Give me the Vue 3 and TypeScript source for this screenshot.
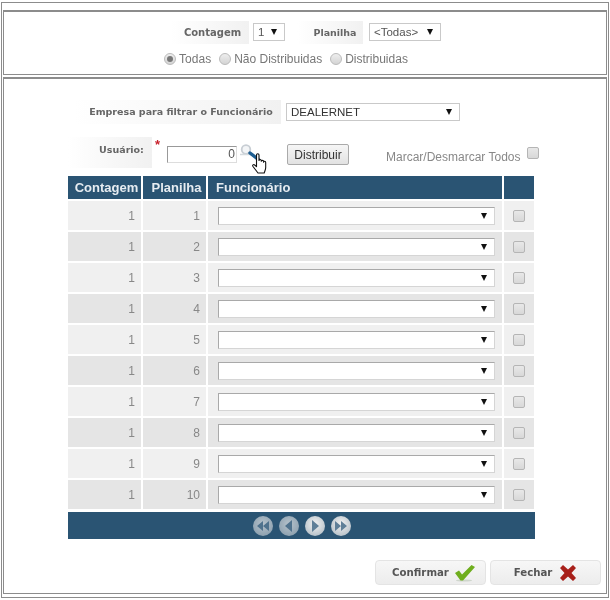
<template>
    <div class="frame">
        <section class="panel filters">
            <div class="filter-row">
                <span class="label label-contagem">Contagem</span>
                <div class="select select-count"><span>1</span><i class="arrow"></i></div>
                <span class="label label-planilha">Planilha</span>
                <div class="select select-sheet"><span>&lt;Todas&gt;</span><i class="arrow"></i></div>
            </div>
            <div class="radio-row">
                <label v-for="opt in radioOptions" :key="opt" class="radio-option">
                    <span class="radio" :class="{ on: opt === selected }"></span>{{ opt }}
                </label>
            </div>
        </section>

        <section class="panel main">
            <div class="company-row">
                <span class="label label-company">Empresa para filtrar o Funcionário</span>
                <div class="select select-company"><span>DEALERNET</span><i class="arrow"></i></div>
            </div>

            <div class="user-row">
                <span class="label label-user">Usuário:</span>
                <span class="required">*</span>
                <div class="user-input">0</div>
                <div class="lookup">
                    <svg width="34" height="32" viewBox="0 0 34 32">
                        <circle cx="6" cy="5.500" r="4.300" fill="#f3f5f7" stroke="#c8ced4" stroke-width="1.800" />
                        <path d="M0 10.500h11" stroke="#d4dade" stroke-width="1.500" />
                        <path d="M10 9l9 7" stroke="#1f5f92" stroke-width="3.400" stroke-linecap="round" />
                        <path
                            transform="translate(3 1)"
                            d="M15 28l-5-6.500c-1-1.400.6-2.600 1.700-1.500l1.800 1.700V10c0-1.700 2.500-1.700 2.500 0v5.500c0-1.300 2.300-1.300 2.300 0v.8c0-1.300 2.300-1.300 2.300 0v.9c0-1.200 2.100-1.200 2.100.2v5.100c0 2-.8 3.300-1.500 5.500z"
                            fill="#fff"
                            stroke="#111"
                            stroke-width="1.100"
                            stroke-linejoin="round"
                        />
                    </svg>
                </div>
                <button class="btn-distribute" type="button">Distribuir</button>
                <span class="mark-all">Marcar/Desmarcar Todos</span>
                <span class="check mark-all-check"></span>
            </div>

            <div class="grid">
                <div class="head head-center">Contagem</div>
                <div class="head head-center">Planilha</div>
                <div class="head head-left">Funcionário</div>
                <div class="head"></div>
                <template v-for="n in rows" :key="n">
                    <div class="cell num" :class="{ alt: n % 2 === 0 }">1</div>
                    <div class="cell num" :class="{ alt: n % 2 === 0 }">{{ n }}</div>
                    <div class="cell pick" :class="{ alt: n % 2 === 0 }">
                        <div class="select select-row"><i class="arrow"></i></div>
                    </div>
                    <div class="cell mid" :class="{ alt: n % 2 === 0 }"><span class="check"></span></div>
                </template>
            </div>

            <div class="pager">
                <span
                    v-for="(p, i) in pagerIcons"
                    :key="p"
                    class="pager-btn"
                    :class="{ dim: i < 2 }"
                >
                    <svg width="14" height="12" viewBox="0 0 14 12">
                        <path :d="p" fill="#5f7f98" />
                    </svg>
                </span>
            </div>

            <div class="actions">
                <button class="action" type="button">
                    Confirmar
                    <svg width="22" height="18" viewBox="0 0 22 18">
                        <ellipse cx="10" cy="16.500" rx="8" ry="1" fill="#cfd6cc" />
                        <path d="M1 9l4-2.500 3 4L17.500 1 21 3 9 16.500H6.500z" fill="#6fae1e" />
                    </svg>
                </button>
                <button class="action" type="button">
                    Fechar
                    <svg width="18" height="18" viewBox="0 0 18 18">
                        <path
                            d="M1 4l3-3 5 4.500L14 1l3 3-4.500 5 4.500 5-3 3-5-4.500L4 17l-3-3 4.500-5z"
                            fill="#a8201a"
                        />
                    </svg>
                </button>
            </div>
        </section>
    </div>
</template>

<script setup lang="ts">
const radioOptions: string[] = ['Todas', 'Não Distribuidas', 'Distribuidas'];
const selected = 'Todas';
const rows: number[] = [1, 2, 3, 4, 5, 6, 7, 8, 9, 10];

// first, previous, next, last
const pagerIcons: string[] = [
    'M7 1v10L1 6zM13 1v10L7 6z',
    'M10 0v12L3 6z',
    'M4 0v12l7-6z',
    'M1 1v10l6-5zM7 1v10l6-5z',
];
</script>

<style>
html,
body {
    background: #fff;
}
</style>

<style scoped>
.frame {
    box-sizing: border-box;
    width: 608px;
    height: 596px;
    margin: 2px 0 0 1px;
    padding: 7px 1px 3px;
    border: 1px solid #8c8c8c;
    display: flex;
    flex-direction: column;
    gap: 2px;
    font-family: 'Liberation Sans', Arial, sans-serif;
    font-size: 12px;
    color: #777;
    filter: blur(0.45px);
}

.panel {
    box-sizing: border-box;
    border: 1px solid #8c8c8c;
    border-top-width: 2px;
    background: #fff;
}

.filters {
    height: 65px;
    padding-top: 9px;
}

.main {
    flex: 1;
    padding-top: 21px;
    position: relative;
}

.label {
    box-sizing: border-box;
    display: flex;
    align-items: center;
    justify-content: center;
    font-family: 'DejaVu Sans', Verdana, sans-serif;
    font-size: 10px;
    font-weight: bold;
    color: #666;
    background: linear-gradient(90deg, #fff, #f1f1f1);
}

.filter-row {
    display: flex;
    align-items: center;
    height: 22px;
    padding-left: 167px;
}

.label-contagem {
    width: 78px;
    height: 23px;
    margin-right: 4px;
    padding-left: 5px;
}

.label-planilha {
    width: 66px;
    height: 23px;
    margin: 0 6px 0 12px;
    padding-left: 10px;
    font-size: 9.500px;
}

.select {
    box-sizing: border-box;
    display: flex;
    align-items: center;
    justify-content: space-between;
    height: 18px;
    padding: 0 7px 0 4px;
    border: 1px solid #c9c9c9;
    background: #fff;
    color: #555;
    font-size: 11.500px;
}

.select-row {
    justify-content: flex-end;
    width: 100%;
    border-color: #a9a9a9 #d5d5d5 #d5d5d5 #a9a9a9;
    color: #222;
}

.arrow {
    width: 0;
    height: 0;
    border-left: 3.500px solid transparent;
    border-right: 3.500px solid transparent;
    border-top: 6px solid #111;
}

.select-count {
    width: 32px;
}

.select-sheet {
    width: 72px;
}

.select-company {
    width: 174px;
    color: #333;
}

.radio-row {
    display: flex;
    justify-content: center;
    gap: 8px;
    margin-top: 9px;
    padding-right: 38px;
    line-height: 14px;
}

.radio-option {
    display: flex;
    align-items: center;
    gap: 3px;
}

.radio {
    box-sizing: border-box;
    display: flex;
    align-items: center;
    justify-content: center;
    width: 12px;
    height: 12px;
    border: 1px solid #bbb;
    border-radius: 50%;
    background: linear-gradient(#eee, #d4d4d4);
}

.radio.on::after {
    content: '';
    width: 6px;
    height: 6px;
    border-radius: 50%;
    background: #777;
}

.company-row {
    display: flex;
    align-items: center;
    height: 24px;
    padding-left: 70px;
    gap: 5px;
}

.label-company {
    width: 207px;
    height: 24px;
    padding: 0 0 2px 7px;
    font-size: 9.500px;
}

.user-row {
    display: flex;
    height: 31px;
    margin-top: 13px;
    padding-left: 64px;
    position: relative;
}

.label-user {
    width: 84px;
    height: 31px;
    padding: 0 0 6px 23px;
    font-size: 9.500px;
}

.required {
    width: 12px;
    margin-left: 3px;
    color: #c8202a;
    font-weight: bold;
    font-size: 13px;
    line-height: 16px;
}

.user-input {
    box-sizing: border-box;
    width: 70px;
    height: 17px;
    margin-top: 9px;
    padding-right: 1px;
    border: 1px solid #bbb;
    border-color: #999 #ddd #ddd #999;
    text-align: right;
    font-size: 12px;
    line-height: 15px;
    color: #555;
}

.lookup {
    position: absolute;
    left: 236px;
    top: 7px;
    width: 34px;
    height: 32px;
}

.btn-distribute {
    box-sizing: border-box;
    width: 62px;
    height: 21px;
    margin: 7px 0 0 50px;
    padding: 0;
    border: 1px solid #aaa;
    border-radius: 2px;
    background: linear-gradient(#f6f6f6, #e2e2e2);
    font: 12px 'Liberation Sans', Arial, sans-serif;
    color: #333;
}

.mark-all {
    margin: 13px 0 0 37px;
    line-height: 14px;
    color: #888;
    white-space: nowrap;
}

.check {
    box-sizing: border-box;
    display: block;
    width: 12px;
    height: 12px;
    border: 1px solid #b5b5b5;
    border-radius: 2px;
    background: linear-gradient(#e8e8e8, #d8d8d8);
}

.mark-all-check {
    margin: 10px 0 0 7px;
}

.grid {
    display: grid;
    grid-template-columns: 73px 63px 294px 30px;
    grid-template-rows: 23px;
    grid-auto-rows: 29px;
    gap: 2px;
    width: 466px;
    margin: 8px 0 0 64px;
}

.head {
    display: flex;
    align-items: center;
    background: #2a5473;
    color: #e6ecf1;
    font-weight: bold;
    font-size: 13px;
}

.head-center {
    justify-content: center;
    padding-left: 4px;
}

.head-left {
    padding-left: 8px;
}

.cell {
    display: flex;
    align-items: center;
    background: #f0f0f0;
    color: #888;
}

.cell.alt {
    background: #e5e5e5;
}

.num {
    justify-content: flex-end;
    padding-right: 6px;
}

.pick {
    padding: 0 7px 0 10px;
}

.mid {
    justify-content: center;
}

.pager {
    display: flex;
    justify-content: center;
    align-items: center;
    gap: 6px;
    width: 467px;
    height: 27px;
    margin: 3px 0 0 64px;
    background: #2a5473;
}

.pager-btn {
    display: flex;
    align-items: center;
    justify-content: center;
    width: 20px;
    height: 20px;
    border-radius: 50%;
    background: radial-gradient(circle at 50% 40%, #f2f2f2, #a7b4be);
}

.pager-btn.dim {
    opacity: 0.7;
}

.actions {
    display: flex;
    justify-content: flex-end;
    gap: 4px;
    margin-top: 21px;
    padding-right: 5px;
}

.action {
    box-sizing: border-box;
    display: flex;
    align-items: center;
    justify-content: center;
    gap: 5px;
    width: 111px;
    height: 25px;
    padding: 0;
    border: 1px solid #e4e4e4;
    border-radius: 4px;
    background: linear-gradient(#f7f7f7, #ececec);
    font: bold 10.200px 'DejaVu Sans', Verdana, sans-serif;
    color: #555;
}

.action:first-child {
    padding-left: 7px;
}

.action + .action {
    gap: 7px;
}
</style>
